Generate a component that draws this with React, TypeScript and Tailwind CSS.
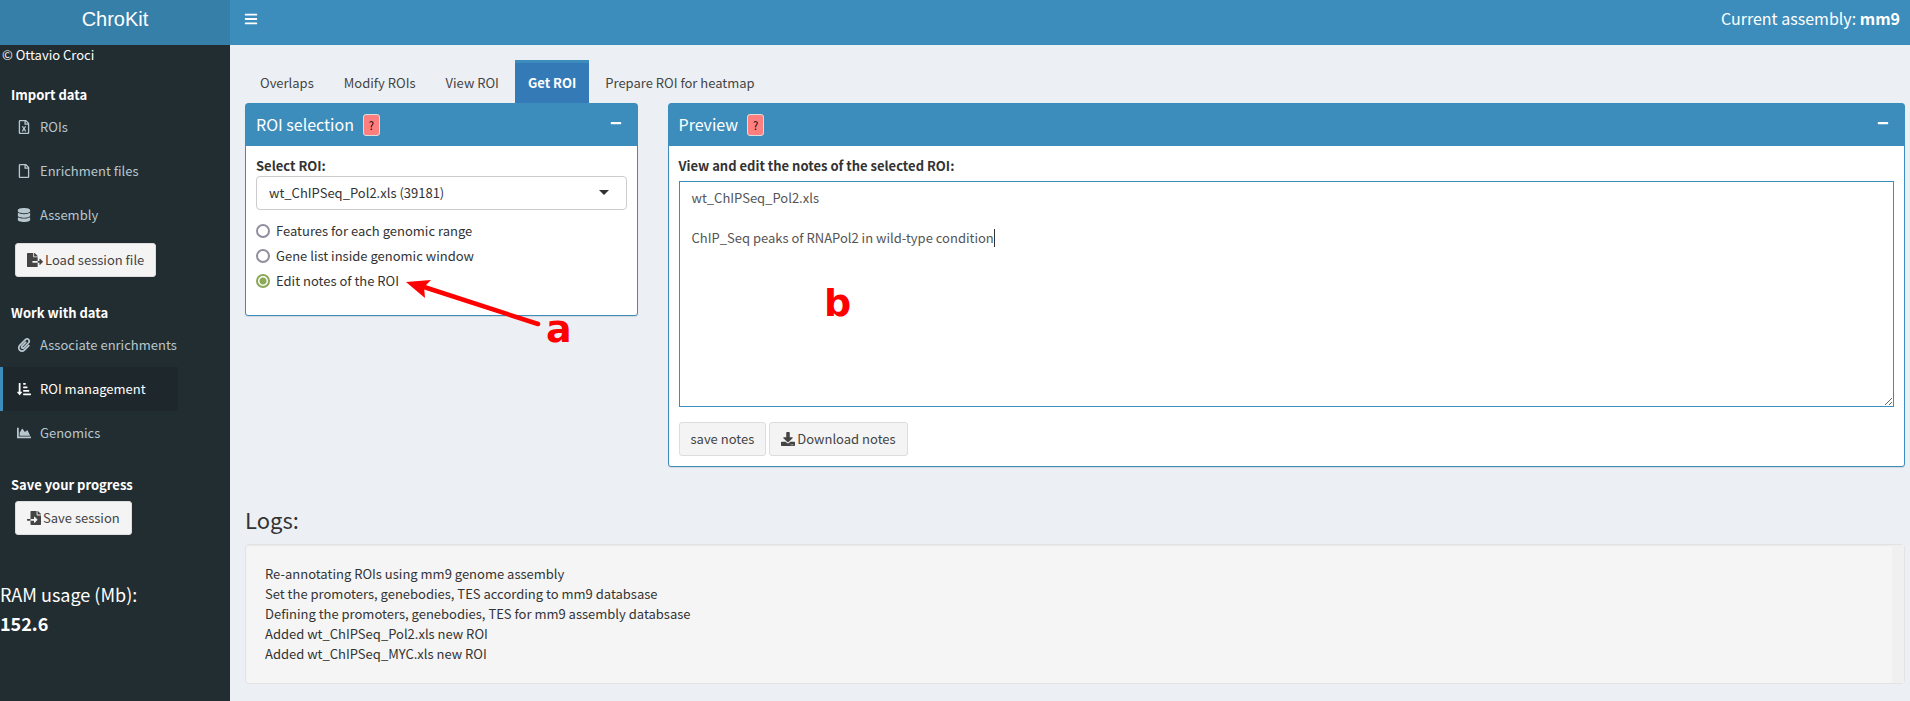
import { useEffect, useRef, type ReactNode } from "react";
import {
  FaBars,
  FaChartArea,
  FaDatabase,
  FaDownload,
  FaFileExport,
  FaFileImport,
  FaMinus,
  FaPaperclip,
  FaRegFile,
  FaRegFileExcel,
  FaSortAmountDownAlt,
} from "react-icons/fa";

type NavItemProps = { icon: ReactNode; label: string; active?: boolean };

function NavItem({ icon, label, active = false }: NavItemProps) {
  return (
    <li>
      <a
        href="#"
        aria-current={active ? "page" : undefined}
        className={
          active
            ? "flex h-11 items-center border-l-3 border-[#3c8dbc] bg-[#1e282c] pl-3.5 text-white"
            : "flex h-11 items-center border-l-3 border-transparent pl-3.5 text-[#b8c7ce]"
        }
      >
        <span className="w-[23px] text-sm">{icon}</span>
        {label}
      </a>
    </li>
  );
}

function SidebarHeading({ children }: { children: ReactNode }) {
  return <h2 className="pl-[11px] font-bold text-white">{children}</h2>;
}

function Button({ icon, children }: { icon?: ReactNode; children: ReactNode }) {
  return (
    <button
      type="button"
      className="inline-flex h-[34px] items-center gap-0.5 rounded-[3px] border border-[#ddd] bg-[#f4f4f4] px-[11px] text-[#444]"
    >
      {icon}
      {children}
    </button>
  );
}

function Box({ title, className, children }: { title: string; className?: string; children: ReactNode }) {
  return (
    <section className={`rounded-[3px] border border-[#3c8dbc] bg-white shadow-[0_1px_1px_rgba(0,0,0,0.1)] ${className ?? ""}`}>
      <header className="flex h-[42px] items-center bg-[#3c8dbc] px-2.5 text-white">
        <h3 className="pb-[3px] text-base">{title}</h3>
        <button
          type="button"
          aria-label={`Help: ${title}`}
          className="ml-[9px] h-[22px] w-[17px] rounded-[3px] border border-[#ddd] bg-[#ff7f7f] text-[11px] leading-5 text-black"
        >
          ?
        </button>
        <button type="button" aria-label={`Collapse ${title}`} className="mr-[5px] mb-1 ml-auto text-xs">
          <FaMinus />
        </button>
      </header>
      <div className="p-2.5">{children}</div>
    </section>
  );
}

const tabs = ["Overlaps", "Modify ROIs", "View ROI", "Get ROI", "Prepare ROI for heatmap"];
const views = ["Features for each genomic range", "Gene list inside genomic window", "Edit notes of the ROI"];
const logs = [
  "Re-annotating ROIs using mm9 genome assembly",
  "Set the promoters, genebodies, TES according to mm9 databsase",
  "Defining the promoters, genebodies, TES for mm9 assembly databsase",
  "Added wt_ChIPSeq_Pol2.xls new ROI",
  "Added wt_ChIPSeq_MYC.xls new ROI",
];

export default function App() {
  const notes = useRef<HTMLTextAreaElement>(null);

  useEffect(() => {
    const field = notes.current;
    if (!field) return;
    field.focus();
    field.setSelectionRange(field.value.length, field.value.length);
  }, []);

  return (
    <div className="relative flex min-h-screen bg-[#ecf0f5] font-['Source_Sans_Pro','Noto_Sans_CJK_SC',sans-serif] text-[13px] leading-5 text-[#333]">
      <aside className="w-[230px] shrink-0 bg-[#222d32]">
        <div className="h-[45px] bg-[#367fa9] text-center font-['Liberation_Sans',Arial,sans-serif] text-xl leading-[38px] text-white">
          ChroKit
        </div>
        <p className="pl-0.5 text-white">© Ottavio Croci</p>
        <nav className="w-[178px] pt-5">
          <SidebarHeading>Import data</SidebarHeading>
          <ul>
            <NavItem icon={<FaRegFileExcel />} label="ROIs" />
            <NavItem icon={<FaRegFile />} label="Enrichment files" />
            <NavItem icon={<FaDatabase />} label="Assembly" />
          </ul>
          <div className="mt-[6px] mb-[26px] pl-[15px]">
            <Button icon={<FaFileExport className="text-base" />}>Load session file</Button>
          </div>
          <SidebarHeading>Work with data</SidebarHeading>
          <ul>
            <NavItem icon={<FaPaperclip />} label="Associate enrichments" />
            <NavItem icon={<FaSortAmountDownAlt />} label="ROI management" active />
            <NavItem icon={<FaChartArea />} label="Genomics" />
          </ul>
          <div className="mt-5">
            <SidebarHeading>Save your progress</SidebarHeading>
          </div>
          <div className="mt-[6px] pl-[15px]">
            <Button icon={<FaFileImport className="text-sm" />}>Save session</Button>
          </div>
        </nav>
        <p className="mt-[45px] text-lg leading-[29px] text-white">
          RAM usage (Mb):
          <br />
          <strong>152.6</strong>
        </p>
      </aside>

      <div className="min-w-0 grow">
        <header className="flex h-[45px] justify-between bg-[#3c8dbc] pr-2.5 pl-3.5 text-white">
          <button type="button" aria-label="Toggle navigation" className="h-[38px] text-sm">
            <FaBars />
          </button>
          <p className="text-base leading-9">
            Current assembly: <strong>mm9</strong>
          </p>
        </header>

        <main className="pt-[15px] pr-[5px] pl-[15px]">
          <nav className="flex gap-0.5 pl-px">
            {tabs.map((tab) => (
              <a
                key={tab}
                href="#"
                className={
                  tab === "Get ROI"
                    ? "h-[43px] border-t-3 border-[#3c8dbc] bg-[#337ab7] px-[13px] py-2.5 font-semibold text-white"
                    : "h-[43px] border-t-3 border-transparent px-[14px] py-2.5 text-[#444]"
                }
              >
                {tab}
              </a>
            ))}
          </nav>

          <div className="grid grid-cols-4 items-start gap-x-[30px]">
            <Box title="ROI selection">
              <label htmlFor="roi" className="block font-bold">
                Select ROI:
              </label>
              <div className="relative">
                <select
                  id="roi"
                  className="block h-[34px] w-full appearance-none rounded border border-[#ccc] bg-white px-3 text-[#333]"
                >
                  <option>wt_ChIPSeq_Pol2.xls (39181)</option>
                </select>
                <svg viewBox="0 0 10 5" className="pointer-events-none absolute top-3.5 right-[18px] h-[5px] w-2.5" aria-hidden="true">
                  <path d="M0 0h10L5 5z" fill="#333" />
                </svg>
              </div>
              <fieldset className="mt-2 mb-3">
                {views.map((view, i) => (
                  <label key={view} className="flex h-[25px] items-center gap-[6px]">
                    <input
                      type="radio"
                      name="view"
                      defaultChecked={i === 2}
                      className="size-3.5 appearance-none rounded-full border-2 border-[#908f9f] bg-white checked:border-[#8aa855] checked:bg-[radial-gradient(circle,#8aa855_3px,white_4px)]"
                    />
                    {view}
                  </label>
                ))}
              </fieldset>
            </Box>

            <Box title="Preview" className="col-span-3">
              <label htmlFor="notes" className="mb-[5px] block font-bold">
                View and edit the notes of the selected ROI:
              </label>
              <div className="relative">
                <textarea
                  id="notes"
                  ref={notes}
                  spellCheck={false}
                  defaultValue={"wt_ChIPSeq_Pol2.xls\n\nChIP_Seq peaks of RNAPol2 in wild-type condition"}
                  className="block h-[226px] w-full resize border border-[#3c8dbc] px-3 py-[6px] text-[#555] caret-transparent outline-none"
                />
                <span aria-hidden="true" className="pointer-events-none absolute top-12 left-[315px] h-[18px] w-px bg-[#333]" />
              </div>
              <div className="mt-[15px] flex gap-[3px]">
                <Button>save notes</Button>
                <Button icon={<FaDownload className="text-sm" />}>Download notes</Button>
              </div>
            </Box>
          </div>

          <h2 className="mt-[39px] text-[22px] leading-[26px]">Logs:</h2>
          <section
            aria-label="Logs"
            className="mt-3 flex rounded border border-[#e3e3e3] bg-[#f5f5f5] shadow-[inset_0_1px_1px_rgba(0,0,0,0.05)]"
          >
            <div className="grow py-[19px] pl-[19px]">
              {logs.map((line) => (
                <p key={line}>{line}</p>
              ))}
            </div>
            <div className="w-3 bg-[#f0f0f0]" />
          </section>
        </main>
      </div>

      <svg viewBox="0 0 140 52" className="pointer-events-none absolute top-[278px] left-[406px] h-[52px] w-[140px]" aria-hidden="true">
        <path d="M18 9 132 46" stroke="#f00" strokeWidth="4.5" strokeLinecap="round" />
        <path d="M0 4 25 2 18 9 19 20z" fill="#f00" />
      </svg>
      <span className="pointer-events-none absolute top-[309px] left-[546px] font-['DejaVu_Sans',sans-serif] text-[38px] leading-10 font-bold text-[#f00]">a</span>
      <span className="pointer-events-none absolute top-[283px] left-[824px] font-['DejaVu_Sans',sans-serif] text-[38px] leading-10 font-bold text-[#f00]">b</span>
    </div>
  );
}
